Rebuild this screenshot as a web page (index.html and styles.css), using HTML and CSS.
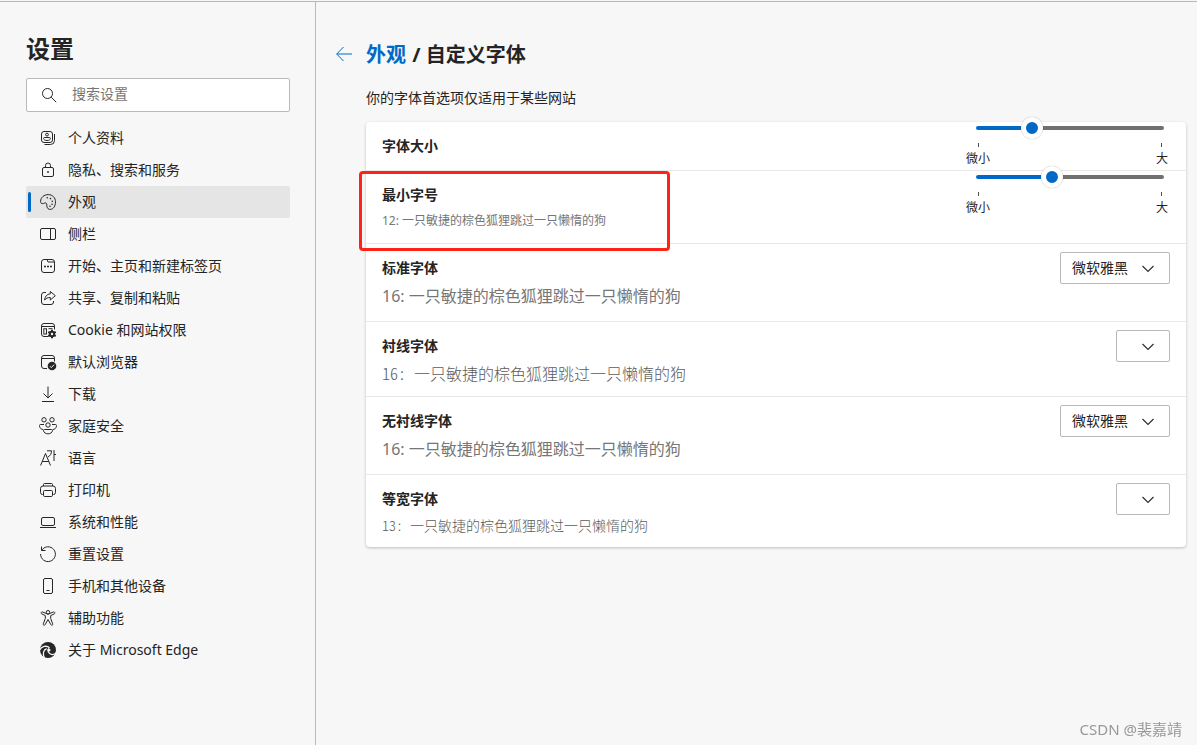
FILE: index.html
```html
<!DOCTYPE html>
<html lang="zh-CN">
<head>
<meta charset="utf-8">
<meta name="viewport" content="width=device-width, initial-scale=1">
<title>设置</title>
<link rel="stylesheet" href="styles.css">
</head>
<body>
<div class="layout">
  <aside class="sidebar">
    <h1 class="sidebar-title">设置</h1>
    <label class="search">
      <svg class="icon" viewBox="0 0 16 16" aria-hidden="true"><circle cx="6.5" cy="6.5" r="5"/><path d="M10.2 10.2l5 5"/></svg>
      <input class="search-input" type="search" placeholder="搜索设置" aria-label="搜索设置">
    </label>
    <nav class="nav">
      <a class="nav-item" href="#profiles"><svg class="icon" viewBox="0 0 16 16"><rect x="1.5" y="1.5" width="11" height="11" rx="2.5"/><circle cx="7" cy="4.6" r="1.4"/><path d="M4.5 7.5h5c.6 0 .9.4.9.9 0 1.300-1.400 2.100-3.400 2.100s-3.400-.8-3.400-2.100c0-.5.3-.9.9-.9zM14.500 4v6.500a4 4 0 0 1-4 4H4.500"/></svg>个人资料</a>
      <a class="nav-item" href="#privacy"><svg class="icon" viewBox="0 0 16 16"><rect x="2.500" y="5.500" width="11" height="9" rx="1.500"/><path d="M5.500 5.500V3.500a2.500 2.500 0 0 1 5 0v2"/><circle class="solid" cx="8" cy="10" r=".9"/></svg>隐私、搜索和服务</a>
      <a class="nav-item nav-item-active" href="#appearance" aria-current="page"><svg class="icon" viewBox="0 0 16 16"><path d="M.6 7.500C.6 3.300 4.200.6 8.200.6c4.500 0 7.300 3.300 7.300 7.200 0 4.300-2.200 7.600-5.200 7.600-1.700 0-2.900-.9-3.300-2.500-.4-1.500.2-2.700-.7-3.600-.8-.8-1.700-.2-2.900.2C1.700 10 .6 9.300.6 7.500z"/><g class="dots"><circle cx="7.300" cy="3.800" r=".8"/><circle cx="10.500" cy="4.600" r=".8"/><circle cx="12.300" cy="7.200" r=".8"/><circle cx="12" cy="10.200" r=".8"/><circle cx="10" cy="12.200" r=".8"/></g></svg>外观</a>
      <a class="nav-item" href="#sidebar"><svg class="icon" viewBox="0 0 16 16"><rect x=".5" y="2.500" width="15" height="11" rx="1.500"/><path d="M10.500 2.500v11"/></svg>侧栏</a>
      <a class="nav-item" href="#start"><svg class="icon" viewBox="0 0 16 16"><rect x="1.500" y="1.500" width="13" height="13" rx="2.500"/><path d="M7 1.500l1 2.500h6"/><g class="solid"><circle cx="5" cy="8.500" r="1"/><circle cx="8" cy="8.500" r="1"/><circle cx="11" cy="8.500" r="1"/></g></svg>开始、主页和新建标签页</a>
      <a class="nav-item" href="#share"><svg class="icon" viewBox="0 0 16 16"><path d="M6 2.500H4A2.500 2.500 0 0 0 1.500 5v7A2.500 2.500 0 0 0 4 14.500h7a2.500 2.500 0 0 0 2.500-2.500v-1"/><path d="M10.300 1.500l5 4.200-5 4.300V7.500c-2.600 0-4.300.7-5.700 2.600.3-3.600 2.200-6 5.700-6.300z"/></svg>共享、复制和粘贴</a>
      <a class="nav-item" href="#cookies"><svg class="icon" viewBox="0 0 16 16"><path d="M8.500 14.500H4A2.500 2.500 0 0 1 1.500 12V4A2.500 2.500 0 0 1 4 1.500h8A2.500 2.500 0 0 1 14.500 4v3.500M1.500 4.500h13"/><rect x="3.800" y="6.800" width="2.700" height="5.200"/><path d="M8.500 6.700h4"/><circle class="solid" cx="12" cy="12" r="3.200"/><path class="cog" d="M12 7.700v8.600M8.300 9.800l7.400 4.400M8.300 14.200l7.400-4.400"/><circle class="hole" cx="12" cy="12" r="1.200"/></svg>Cookie 和网站权限</a>
      <a class="nav-item" href="#default"><svg class="icon" viewBox="0 0 16 16"><path d="M7 14.500H4A2.500 2.500 0 0 1 1.500 12V4A2.500 2.500 0 0 1 4 1.500h8A2.500 2.500 0 0 1 14.500 4v3.500M1.500 4.500h13"/><circle class="solid" cx="12" cy="12" r="4.300"/><path class="knockout" d="M9.900 12.200l1.400 1.400 2.800-3"/></svg>默认浏览器</a>
      <a class="nav-item" href="#downloads"><svg class="icon" viewBox="0 0 16 16"><path d="M8 .5v11M3.500 7.500L8 12l4.500-4.500M2 15.500h12"/></svg>下载</a>
      <a class="nav-item" href="#family"><svg class="icon" viewBox="0 0 16 16"><circle cx="4" cy="1.800" r="2.200"/><circle cx="12" cy="1.800" r="2.200"/><circle cx="8" cy="7" r="2.200"/><path d="M4 6.500H.5C-.6 6.500-.6 7.500-.4 8.500c.4 1.700 1.600 2.900 3.400 3M12 6.500h3.500c1.100 0 1.100 1 .9 2-.4 1.700-1.600 2.900-3.400 3M4.500 11.500h7c.8 0 1.100.5 1 1.100-.3 2-2.100 3.200-4.500 3.200s-4.200-1.200-4.500-3.200c-.1-.6.200-1.100 1-1.100z"/></svg>家庭安全</a>
      <a class="nav-item" href="#languages"><svg class="icon" viewBox="0 0 16 16"><path d="M.6 15.500L5.500 3.500l5 12M2.300 11.500h6.500M7 .8h4.500c0 3-1.300 5-3.500 6.200M14 0v11M14 4.500h2"/></svg>语言</a>
      <a class="nav-item" href="#printers"><svg class="icon" viewBox="0 0 16 16"><path d="M3.500 4V2.500a1 1 0 0 1 1-1h7a1 1 0 0 1 1 1V4M3.500 12.500h-1a2 2 0 0 1-2-2V6.500a2.500 2.500 0 0 1 2.500-2.500h10a2.500 2.500 0 0 1 2.500 2.500v4a2 2 0 0 1-2 2h-1"/><rect x="3.500" y="8.500" width="9" height="6" rx="1.200"/></svg>打印机</a>
      <a class="nav-item" href="#system"><svg class="icon" viewBox="0 0 16 16"><rect x="1.500" y="3.500" width="13" height="8" rx="1.500"/><path d="M0 13.500h16"/></svg>系统和性能</a>
      <a class="nav-item" href="#reset"><svg class="icon" viewBox="0 0 16 16"><path d="M1.500.5v4h4M1.700 4.300A7.400 7.400 0 1 1 .6 8"/></svg>重置设置</a>
      <a class="nav-item" href="#phone"><svg class="icon" viewBox="0 0 16 16"><rect x="3.500" y=".5" width="9" height="15" rx="1.500"/><path d="M6.500 12.500h3"/></svg>手机和其他设备</a>
      <a class="nav-item" href="#accessibility"><svg class="icon" viewBox="0 0 16 16"><circle cx="8" cy="2.300" r="1.800"/><path d="M6 3.400L2.700 2c-1.400-.5-2.200 1.300-.9 1.900l3.500 1.700v2.900l-2 5.300c-.5 1.400 1.300 2.100 1.900.8L8 9.500l2.800 5.100c.6 1.300 2.400.6 1.900-.8l-2-5.300V5.600l3.500-1.700c1.300-.6.500-2.400-.9-1.900L10 3.400c-1.300.8-2.700.8-4 0z"/></svg>辅助功能</a>
      <a class="nav-item" href="#about"><svg class="icon" viewBox="0 0 16 16"><circle class="solid" cx="8" cy="8" r="8"/><path class="swirl" d="M-.5 8.200C1.500 4.200 6.500 3 9.500 5.800M4.500 16C2.200 11.500 3.500 8 6.700 6.600M16.200 10.500c-2 3-6.200 2.500-7.700-.2-.8-1.500-.6-2.800.5-3.800"/><circle class="hole" cx="9" cy="8" r="1.500"/></svg>关于 Microsoft Edge</a>
    </nav>
  </aside>

  <main class="main">
    <header class="page-head">
      <button class="back" type="button" aria-label="返回"><svg class="icon" viewBox="0 0 16 16"><path d="M16 8H.8M7.500 1L.7 8l6.800 7"/></svg></button>
      <h2 class="crumbs"><a class="crumb-link" href="#appearance">外观</a> / 自定义字体</h2>
    </header>
    <div class="content">
      <p class="intro">你的字体首选项仅适用于某些网站</p>
      <div class="card">
        <section class="row">
          <div class="row-text"><label class="row-title" for="size">字体大小</label></div>
          <div class="slider">
            <input class="range range-size" id="size" type="range" min="0" max="100" value="27">
            <div class="marks"><span class="mark">微小</span><span class="mark">大</span></div>
          </div>
        </section>
        <section class="row row-marked">
          <div class="row-text"><label class="row-title" for="min-size">最小字号</label><p class="sample sample-min">12: 一只敏捷的棕色狐狸跳过一只懒惰的狗</p></div>
          <div class="slider">
            <input class="range range-min" id="min-size" type="range" min="0" max="100" value="39">
            <div class="marks"><span class="mark">微小</span><span class="mark">大</span></div>
          </div>
        </section>
        <section class="row">
          <div class="row-text"><label class="row-title" for="standard">标准字体</label><p class="sample sample-large">16: 一只敏捷的棕色狐狸跳过一只懒惰的狗</p></div>
          <div class="picker"><select class="select" id="standard"><option>微软雅黑</option></select><svg class="chevron" viewBox="0 0 12 8"><path d="M.5 1L6 6.500 11.500 1"/></svg></div>
        </section>
        <section class="row">
          <div class="row-text"><label class="row-title" for="serif">衬线字体</label><p class="sample sample-serif">16: 一只敏捷的棕色狐狸跳过一只懒惰的狗</p></div>
          <div class="picker"><select class="select select-empty" id="serif"><option></option></select><svg class="chevron" viewBox="0 0 12 8"><path d="M.5 1L6 6.500 11.500 1"/></svg></div>
        </section>
        <section class="row">
          <div class="row-text"><label class="row-title" for="sans">无衬线字体</label><p class="sample sample-large">16: 一只敏捷的棕色狐狸跳过一只懒惰的狗</p></div>
          <div class="picker"><select class="select" id="sans"><option>微软雅黑</option></select><svg class="chevron" viewBox="0 0 12 8"><path d="M.5 1L6 6.500 11.500 1"/></svg></div>
        </section>
        <section class="row">
          <div class="row-text"><label class="row-title" for="mono">等宽字体</label><p class="sample sample-mono">13: 一只敏捷的棕色狐狸跳过一只懒惰的狗</p></div>
          <div class="picker"><select class="select select-empty" id="mono"><option></option></select><svg class="chevron" viewBox="0 0 12 8"><path d="M.5 1L6 6.500 11.500 1"/></svg></div>
        </section>
      </div>
    </div>
  </main>
</div>
<div class="watermark">CSDN @裴嘉靖</div>
</body>
</html>
```
FILE: styles.css
```css
*, *::before, *::after { box-sizing: border-box; }

body {
  margin: 0;
  padding-top: 1px;
  background: #f7f7f7;
  color: #242424;
  font: 14px/20px "Noto Sans", "Noto Sans CJK SC", sans-serif;
}

h1, h2, p { margin: 0; }
a { color: inherit; text-decoration: none; }
input, select, button { font: inherit; color: inherit; }

.layout {
  display: flex;
  min-height: calc(100vh - 1px);
  border-top: 1px solid #b9b9b9;
}

/* Sidebar */
.sidebar {
  flex: none;
  width: 316px;
  padding: 31px 25px 20px 26px;
  border-right: 1px solid #b9b9b9;
}
.sidebar-title { font-size: 24px; line-height: 32px; margin-bottom: 13px; }

.search {
  display: flex;
  align-items: center;
  gap: 15px;
  height: 34px;
  margin-bottom: 10px;
  padding: 0 14px;
  background: #fff;
  border: 1px solid #bababa;
  border-radius: 2px;
}
.search-input {
  flex: 1;
  min-width: 0;
  padding: 0 0 2px;
  border: 0;
  outline: 0;
  background: none;
}
.search-input::placeholder { color: #767676; opacity: 1; }

.nav { display: flex; flex-direction: column; }
.nav-item {
  position: relative;
  display: flex;
  align-items: center;
  gap: 12px;
  height: 32px;
  padding-left: 14px;
  border-radius: 2px;
}
.nav-item-active { background: #e5e5e5; }
.nav-item-active::before {
  content: "";
  position: absolute;
  left: 2px;
  top: 6px;
  width: 3px;
  height: 20px;
  border-radius: 2px;
  background: #0069c8;
}

.icon {
  flex: none;
  width: 16px;
  height: 16px;
  fill: none;
  stroke: #262626;
  stroke-width: 1;
  overflow: visible;
}
.icon .solid, .icon .dots { fill: #262626; stroke: none; }
.icon .cog { stroke-width: 2; }
.icon .hole { fill: #f7f7f7; stroke: none; }
.icon .knockout { stroke: #f7f7f7; }
.icon .swirl { stroke: #f7f7f7; stroke-width: 1.3; }

/* Main pane */
.main { flex: 1; min-width: 0; padding: 38px 11px 24px 20px; }
.page-head { display: flex; align-items: center; gap: 14px; margin-bottom: 18px; }
.back { display: flex; padding: 0 0 2px; border: 0; background: none; }
.back .icon { stroke: #0069c8; }
.crumbs { font-size: 20px; line-height: 30px; }
.crumb-link { margin-right: 1px; color: #0069c8; }
.content { padding-left: 30px; }
.intro { margin-bottom: 14px; }

.card {
  background: #fff;
  border-radius: 4px;
  box-shadow: 0 1px 3px rgba(0, 0, 0, .24);
}
.row {
  position: relative;
  display: flex;
  justify-content: space-between;
  align-items: flex-start;
  min-height: 49px;
  padding: 0 16px;
  border-bottom: 1px solid #e8e8e8;
}
.row:last-child { border-bottom: 0; }
.row-text { padding: 14px 0 10px; }
.row-title { display: block; font-weight: 700; }

.row-marked::after {
  content: "";
  position: absolute;
  left: -7px;
  top: 0;
  width: 311px;
  height: 80px;
  border: 3px solid #fc2418;
  border-radius: 4px;
  pointer-events: none;
  z-index: 1;
}

.sample { margin-top: 4px; color: #767676; }
.sample-min { font-size: 12px; line-height: 24px; }
.sample-large { font-size: 16px; line-height: 29px; }
.sample-serif, .sample-mono {
  color: #5c5c5c;
  font-family: "Noto Sans CJK SC", sans-serif;
  font-weight: 300;
  font-feature-settings: "hwid";
}
.sample-serif { font-size: 16px; line-height: 26px; }
.sample-mono { font-size: 14px; line-height: 24px; }

/* Sliders */
.slider { width: 202px; margin: -5px 2px 0 0; }
.range {
  display: block;
  appearance: none;
  width: 188px;
  height: 22px;
  margin: 0 0 4px 10px;
  background: none;
}
.range::-webkit-slider-runnable-track { height: 4px; border-radius: 2px; }
.range-size::-webkit-slider-runnable-track { background: linear-gradient(to right, #0069c8 30%, #707070 30%); }
.range-min::-webkit-slider-runnable-track { background: linear-gradient(to right, #0069c8 40%, #707070 40%); }
.range::-webkit-slider-thumb {
  appearance: none;
  width: 22px;
  height: 22px;
  margin-top: -9px;
  border: 5px solid #fff;
  border-radius: 50%;
  background: #0069c8;
  box-shadow: 0 0 1px rgba(0, 0, 0, .4);
}
.marks { display: flex; justify-content: space-between; }
.mark {
  display: flex;
  flex-direction: column;
  align-items: center;
  gap: 4px;
  font-size: 12px;
  line-height: 16px;
}
.mark::before { content: ""; width: 1px; height: 4px; background: #505050; }

/* Font pickers */
.picker { position: relative; margin-top: 8px; }
.select {
  display: block;
  appearance: none;
  width: 110px;
  height: 32px;
  padding: 0 11px;
  border: 1px solid #b9b9b9;
  border-radius: 2px;
  background: #fff;
}
.select-empty { width: 54px; }
.chevron {
  position: absolute;
  right: 16px;
  top: 13px;
  width: 12px;
  height: 8px;
  fill: none;
  stroke: #303030;
  stroke-width: 1.2;
  pointer-events: none;
}

.watermark {
  position: fixed;
  right: 15px;
  bottom: 6px;
  color: #989898;
  font-size: 15px;
}
```
